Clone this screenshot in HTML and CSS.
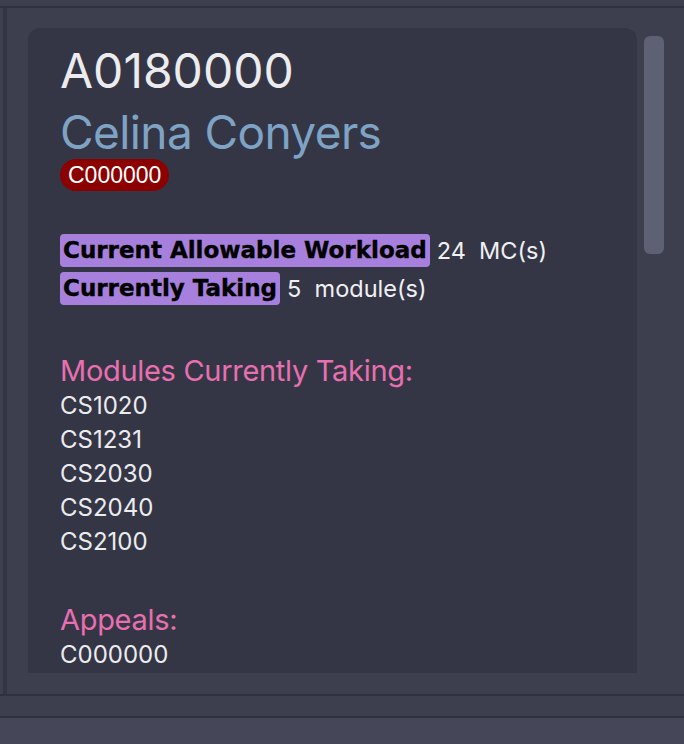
FILE: index.html
```html
<!DOCTYPE html>
<html>
<head>
<meta charset="utf-8">
<link rel="stylesheet" href="styles.css">
</head>
<body>
<div class="app">
  <div class="top-strip"></div>
  <div class="main">
    <div class="left-strip"></div>
    <div class="pane">
      <div class="card">
        <div class="matric">A0180000</div>
        <div class="name">Celina Conyers</div>
        <div class="tags"><span class="badge">C000000</span></div>
        <div class="stats">
          <div class="stat"><span class="label">Current Allowable Workload</span><span class="value">24&nbsp;&nbsp;MC(s)</span></div>
          <div class="stat"><span class="label">Currently Taking</span><span class="value">5&nbsp;&nbsp;module(s)</span></div>
        </div>
        <div class="section">
          <div class="heading">Modules Currently Taking:</div>
          <div class="item">CS1020</div>
          <div class="item">CS1231</div>
          <div class="item">CS2030</div>
          <div class="item">CS2040</div>
          <div class="item">CS2100</div>
        </div>
        <div class="section section-appeals">
          <div class="heading">Appeals:</div>
          <div class="item">C000000</div>
        </div>
      </div>
      <div class="scrollbar"></div>
    </div>
  </div>
  <div class="band"></div>
  <div class="footer"></div>
</div>
</body>
</html>
```
FILE: styles.css
```css
html, body {
  margin: 0;
  padding: 0;
  background: #454759;
}
body {
  width: 684px;
  height: 744px;
  overflow: hidden;
  font-family: "Inter", "Liberation Sans", sans-serif;
}
.app {
  display: flex;
  flex-direction: column;
  height: 744px;
}
.top-strip {
  height: 6px;
  background: #3d3f4f;
  border-bottom: 2px solid #2f3140;
}
.main {
  display: flex;
  height: 686px;
  background: #3d3f4f;
}
.left-strip {
  width: 3px;
  border-right: 4px solid #333544;
  background: #3d3f4f;
}
.pane {
  flex: 1;
  display: flex;
  align-items: flex-start;
  padding: 20px 0 0 21px;
  overflow: hidden;
}
.card {
  width: 609px;
  height: 645px;
  box-sizing: border-box;
  background: #343646;
  border-radius: 12px 12px 0 0;
  padding: 0 0 0 32px;
  overflow: hidden;
}
.scrollbar {
  width: 20px;
  height: 218px;
  margin: 8px 0 0 7px;
  border-radius: 6px;
  background: #5e6074;
}
.matric {
  font-size: 48px;
  line-height: 60px;
  color: #ececee;
  margin-top: 13px;
}
.name {
  font-size: 46px;
  line-height: 62px;
  color: #7ea3c4;
  letter-spacing: -0.6px;
}
.tags {
  display: flex;
  margin-top: -4px;
}
.badge {
  display: inline-block;
  background: #8b0000;
  color: #ffffff;
  font-family: "Liberation Sans", Arial, sans-serif;
  font-size: 23px;
  line-height: 32px;
  padding: 0 8px;
  border-radius: 16px;
}
.stats {
  margin-top: 43px;
  display: flex;
  flex-direction: column;
  gap: 5px;
}
.stat {
  display: flex;
  align-items: center;
}
.label {
  background: #a780dd;
  color: #000000;
  font-family: "DejaVu Sans", sans-serif;
  font-weight: bold;
  font-size: 23px;
  line-height: 33px;
  padding: 0 3px;
  border-radius: 4px;
  -webkit-text-stroke: 0.4px #000000;
}
.value {
  color: #f0f0f2;
  font-size: 23.5px;
  margin-left: 7px;
}
.section {
  margin-top: 47px;
}
.section-appeals {
  margin-top: 42px;
}
.heading {
  color: #e86fb0;
  font-size: 29px;
  line-height: 37px;
  letter-spacing: -0.3px;
}
.item {
  color: #ececee;
  font-size: 24px;
  line-height: 34px;
}
.band {
  height: 20px;
  background: #3d3f4f;
  border-top: 2px solid #2f3140;
  border-bottom: 2px solid #2f3140;
}
.footer {
  flex: 1;
  background: #454759;
}
```
